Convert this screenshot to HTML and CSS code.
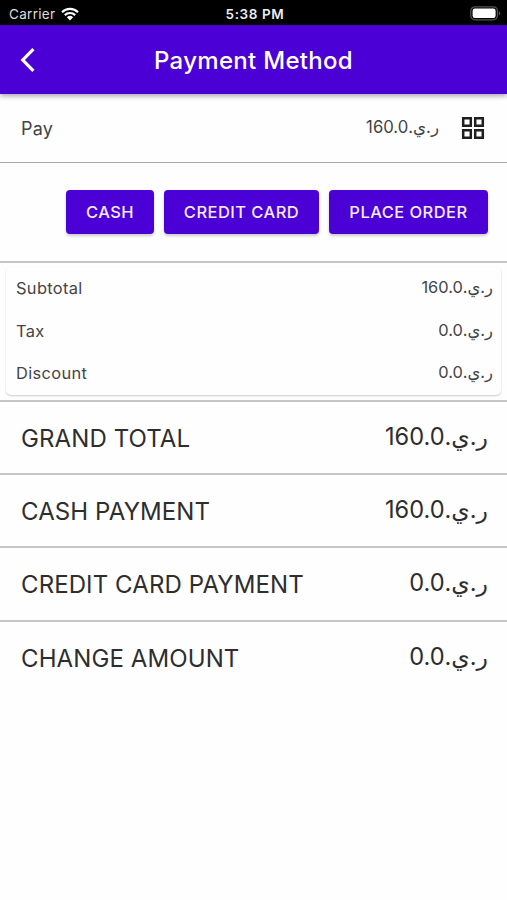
FILE: index.html
```html
<!DOCTYPE html>
<html lang="en">
<head>
    <meta charset="UTF-8">
    <meta name="viewport" content="width=device-width, initial-scale=1.0">
    <title>Payment Method</title>
    <link rel="stylesheet" href="styles.css">
</head>
<body>
    <div class="status-bar">
        <div class="carrier">
            <span>Carrier</span>
            <svg class="wifi" viewBox="0 0 18 14" width="18" height="14">
                <path d="M1 5.2a11.5 11.5 0 0 1 16 0M3.8 8.1a7.5 7.5 0 0 1 10.4 0" fill="none" stroke="#fff" stroke-width="2.2"/>
                <path d="M9 13.6 5.9 10.3a4.5 4.5 0 0 1 6.2 0z" fill="#fff"/>
            </svg>
        </div>
        <span class="time">5:38 PM</span>
        <svg class="battery" viewBox="0 0 31 15" width="31" height="15">
            <rect x="0.8" y="0.8" width="26.6" height="13" rx="4" fill="none" stroke="#555" stroke-width="1.2"/>
            <rect x="2.6" y="2.6" width="23" height="9.4" rx="2.2" fill="#fff"/>
            <path d="M28.8 5c2 .9 2 3.7 0 4.6z" fill="#555"/>
        </svg>
    </div>

    <header class="app-bar">
        <button class="back" aria-label="Back">
            <svg viewBox="0 0 16 26" width="16" height="26">
                <path d="M13.4 2.2 2.8 13l10.6 10.8" fill="none" stroke="#fff" stroke-width="3.2"/>
            </svg>
        </button>
        <h1>Payment Method</h1>
    </header>

    <main>
        <div class="pay-row">
            <span class="label">Pay</span>
            <span class="amount">ر.ي.160.0</span>
            <svg class="grid-icon" viewBox="0 0 24 24" width="24" height="24">
                <path d="M2.2 2.2h7.6v7.6H2.2zM14.2 2.2h7.6v7.6h-7.6zM2.2 14.2h7.6v7.6H2.2zM14.2 14.2h7.6v7.6h-7.6z" fill="none" stroke="#1f1f1f" stroke-width="2.5"/>
            </svg>
        </div>

        <div class="actions">
            <button class="btn cash">Cash</button>
            <button class="btn credit">Credit Card</button>
            <button class="btn order">Place Order</button>
        </div>

        <div class="summary">
            <div class="card">
                <div class="line"><span>Subtotal</span><span class="amount">ر.ي.160.0</span></div>
                <div class="line"><span>Tax</span><span class="amount">ر.ي.0.0</span></div>
                <div class="line"><span>Discount</span><span class="amount">ر.ي.0.0</span></div>
            </div>
        </div>

        <div class="total"><span>GRAND TOTAL</span><span class="amount">ر.ي.160.0</span></div>
        <div class="total"><span>CASH PAYMENT</span><span class="amount">ر.ي.160.0</span></div>
        <div class="total"><span>CREDIT CARD PAYMENT</span><span class="amount">ر.ي.0.0</span></div>
        <div class="total"><span>CHANGE AMOUNT</span><span class="amount">ر.ي.0.0</span></div>
    </main>
</body>
</html>
```
FILE: styles.css
```css
* {
    box-sizing: border-box;
}

body {
    margin: 0;
    background-color: #fefefe;
    color: #444;
    font-family: Inter, "DejaVu Sans", sans-serif;
}

button {
    padding: 0;
    border: none;
    font-family: inherit;
    cursor: pointer;
}

.status-bar {
    display: grid;
    grid-template-columns: 1fr auto 1fr;
    align-items: center;
    height: 25px;
    padding: 2px 6px 0 9px;
    background-color: black;
    color: #eee;
}

.carrier {
    display: flex;
    align-items: center;
    gap: 6px;
    color: #ddd;
    font-size: 13.5px;
    letter-spacing: 0.3px;
}

.time {
    font-size: 13.5px;
    font-weight: 600;
    letter-spacing: 0.6px;
}

.battery {
    justify-self: end;
}

.app-bar {
    display: grid;
    grid-template-columns: 60px 1fr 60px;
    align-items: center;
    height: 69px;
    background-color: #4b00d5;
    color: white;
    box-shadow: 0 2px 5px rgba(0, 0, 0, 0.35);
}

.app-bar h1 {
    margin: 0;
    padding-top: 1px;
    font-size: 24px;
    font-weight: 500;
    text-align: center;
    letter-spacing: 0.3px;
}

.back {
    display: flex;
    padding-left: 20px;
    background: none;
}

.pay-row {
    display: flex;
    align-items: center;
    height: 69px;
    padding: 0 22px 0 21px;
    border-bottom: 1px solid #aaa;
    font-size: 18px;
    letter-spacing: 0.2px;
}

.pay-row .amount {
    margin-left: auto;
    margin-right: 22px;
    font-size: 16.7px;
}

.actions {
    display: flex;
    align-items: center;
    justify-content: flex-end;
    gap: 10px;
    height: 100px;
    padding-right: 19px;
    border-bottom: 2px solid #c6c6c6;
}

.btn {
    height: 44px;
    border-radius: 4px;
    background-color: #4b00d5;
    color: #f3eaff;
    font-size: 16.5px;
    font-weight: 500;
    letter-spacing: 0.45px;
    text-transform: uppercase;
    box-shadow: 0 2px 3px rgba(0, 0, 0, 0.2);
}

.cash {
    width: 88px;
}

.credit {
    width: 155px;
}

.order {
    width: 159px;
}

.summary {
    padding: 4px 6px 5px;
    border-bottom: 2px solid #c6c6c6;
}

.card {
    height: 128px;
    padding: 0 8px 0 10px;
    border-radius: 5px;
    background-color: #fefefe;
    box-shadow: 0 1px 2px rgba(0, 0, 0, 0.2);
}

.line {
    display: flex;
    align-items: center;
    justify-content: space-between;
    height: 42.6px;
    font-size: 16.4px;
    letter-spacing: 0.35px;
}

.total {
    display: flex;
    align-items: center;
    justify-content: space-between;
    height: 73.2px;
    padding: 2px 19px 0 21px;
    border-bottom: 2px solid #c6c6c6;
    color: #2e2e2e;
    font-size: 24px;
    letter-spacing: 0.1px;
}

.total:last-child {
    padding-top: 0;
    border-bottom: none;
}

.amount {
    position: relative;
    top: -1px;
    letter-spacing: 0;
}

.total .amount {
    top: -2px;
    font-size: 23.6px;
}
```
